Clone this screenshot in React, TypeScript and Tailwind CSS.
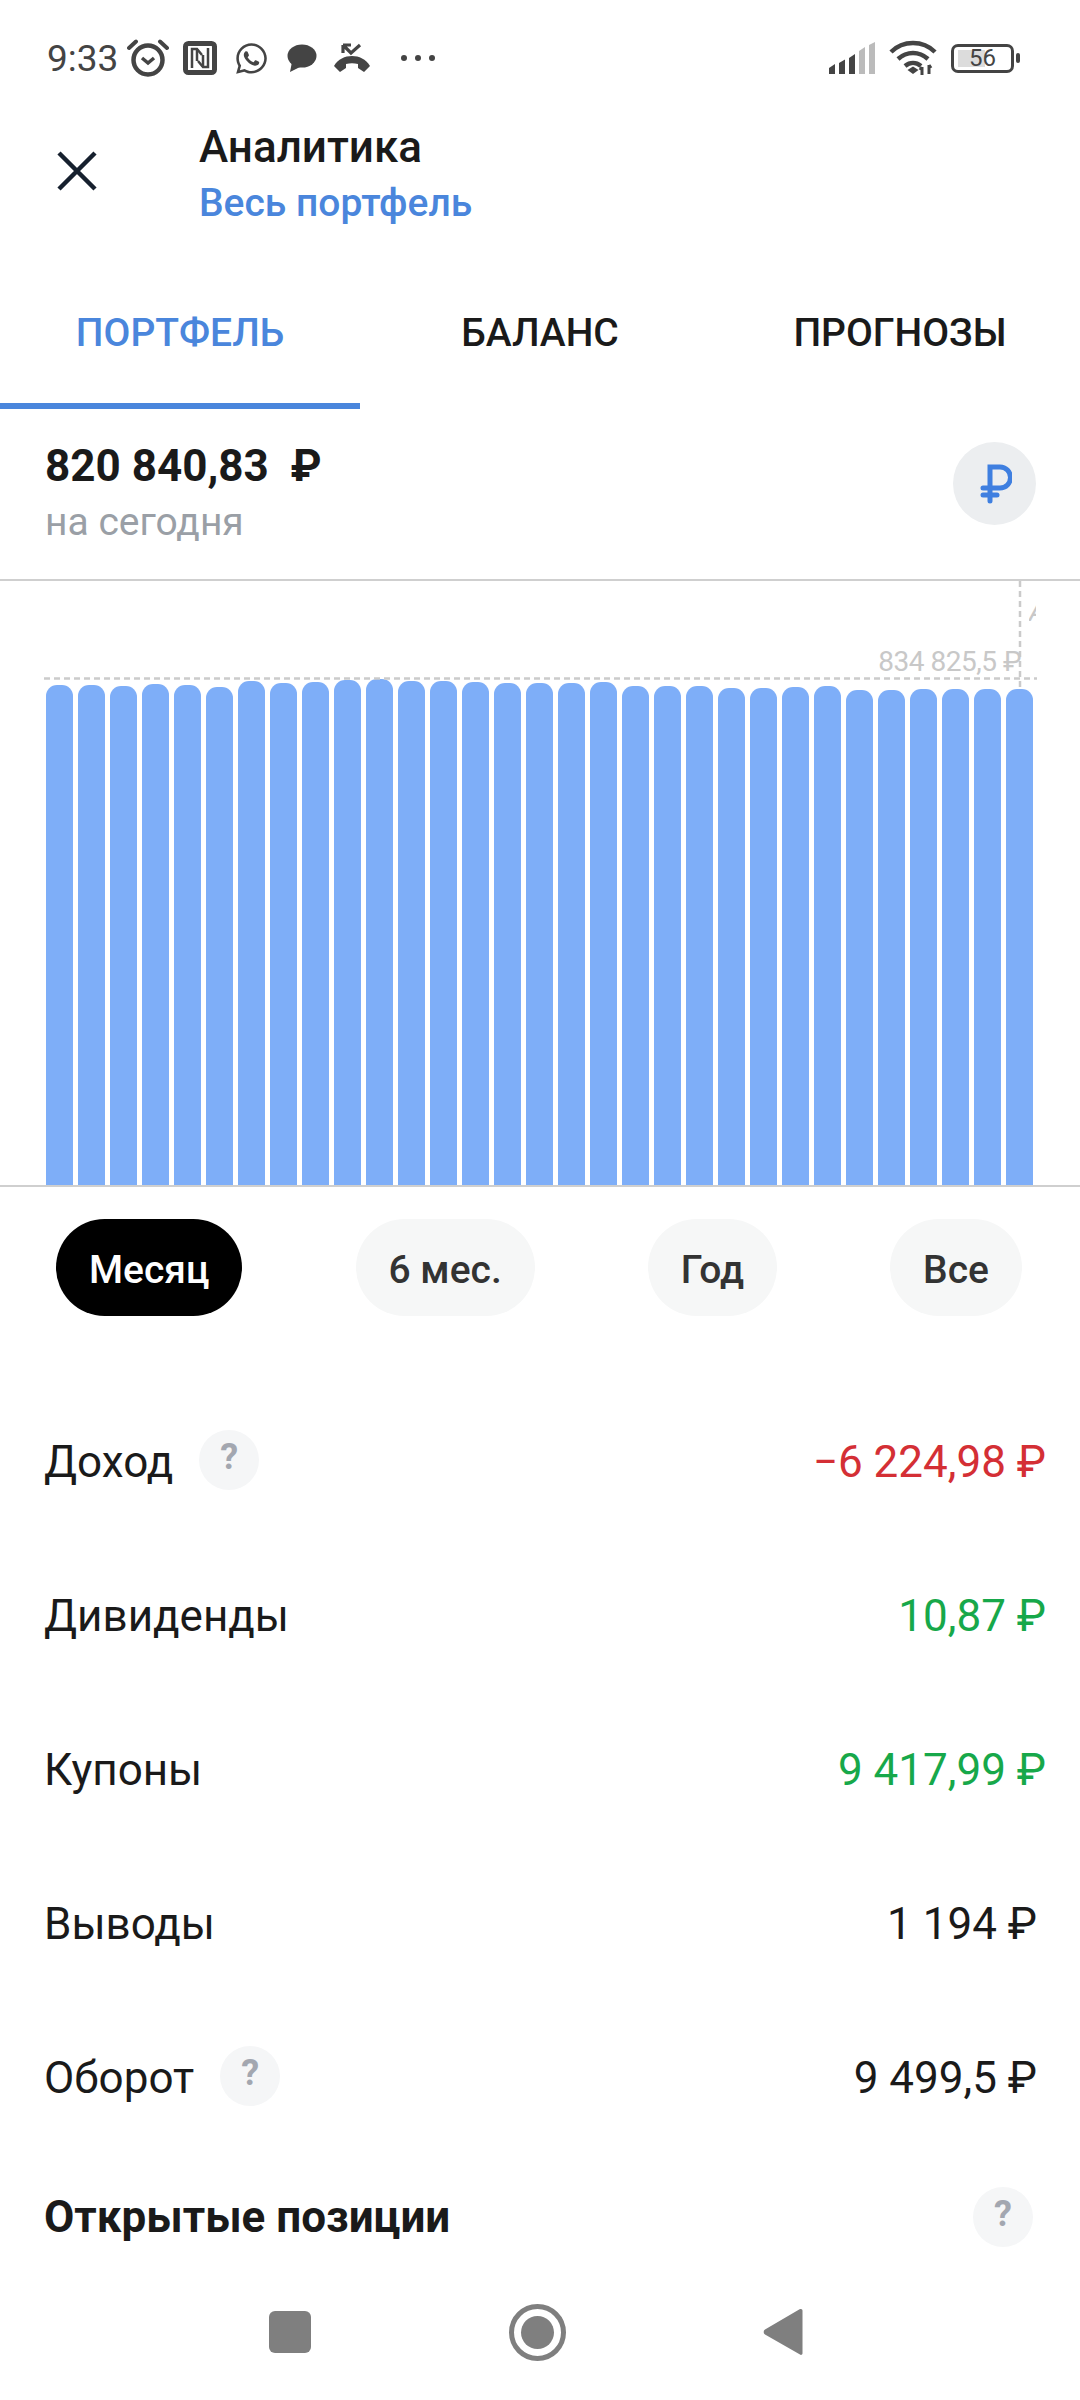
import React from "react";
import { FaWhatsapp } from "react-icons/fa";

const tops = [685,685,686,684,685,687,681,683,682,680,679,681,681,682,683,683,683,682,686,686,686,688,688,687,686,690,690,689,689,689,689];

function Help() {
  return (
    <div className="w-[60px] h-[60px] rounded-full bg-[#f5f6f7] flex items-center justify-center text-[#a3a7b0] text-[36px] font-bold leading-none pb-[6px]">?</div>
  );
}

function Row({ label, value, color, help, pr }: { label: string; value: string; color: string; help?: boolean; pr: string }) {
  return (
    <div className={`h-[154px] flex items-center justify-between pl-[44px] ${pr}`}>
      <div className="flex items-center">
        <span className="text-[44px] text-[#1a1a1a]">{label}</span>
        {help && <div className="ml-[26px] -mt-[5px]"><Help /></div>}
      </div>
      <span className={`text-[44px] ${color}`}>{value}</span>
    </div>
  );
}

function Alarm() {
  return (
    <svg width="42" height="40" viewBox="0 0 42 40" fill="none" stroke="#444" strokeWidth="4">
      <circle cx="21" cy="22" r="14.5" strokeWidth="4.5" />
      <path d="M15 20l6 5 6-5" strokeWidth="3.5" />
      <path d="M2 10L9 3.5M40 10L33 3.5" strokeLinecap="round" />
    </svg>
  );
}

function Nfc() {
  return (
    <svg width="34" height="34" viewBox="0 0 34 34" fill="none">
      <rect x="2.500" y="2.500" width="29" height="29" rx="3" stroke="#444" strokeWidth="5" />
      <path d="M9 27V8h5l5 6" stroke="#444" strokeWidth="2.500" />
      <path d="M25 7v19h-5l-5-6" stroke="#444" strokeWidth="2.500" />
      <path d="M14 8v12M20 14v12" stroke="#444" strokeWidth="2.500" />
    </svg>
  );
}

function Bubble() {
  return (
    <svg width="30" height="28" viewBox="0 0 30 28">
      <ellipse cx="15" cy="12" rx="14.5" ry="11.5" fill="#444" />
      <path d="M3 28l2-10 8 5z" fill="#444" />
    </svg>
  );
}

function MissedCall() {
  return (
    <svg width="38" height="30" viewBox="0 0 38 30" fill="none">
      <path d="M1 23c4-7 11-10 18-10s14 3 18 10l-6 6-6-4v-4c-4-1-8-1-12 0v4l-6 4z" fill="#444" />
      <path d="M10 2h8M10 2v8M10 2l8 8 9-8" stroke="#444" strokeWidth="3.2" />
    </svg>
  );
}

function Signal() {
  return (
    <svg width="48" height="32" viewBox="0 0 48 32">
      <path d="M1 26l6-4v10H1z" fill="#444" />
      <path d="M11 21l6-3.5V32h-6z" fill="#444" />
      <path d="M21 16l6-4v20h-6z" fill="#444" />
      <path d="M31 9l6-4v27h-6z" fill="#bbb" />
      <path d="M41 3l6-3v32h-6z" fill="#bbb" />
    </svg>
  );
}

function Wifi() {
  return (
    <svg width="48" height="36" viewBox="0 0 48 36" fill="none" stroke="#444" strokeWidth="4.5">
      <path d="M2 12C14 0 34 0 46 12" />
      <path d="M9 19c9-8 21-8 30 0" />
      <path d="M16 26c5-4 11-4 16 0" />
      <path d="M18.500 30l5.500-3.500 5.500 3.500-5.500 4z" fill="#444" stroke="none" />
      <path d="M33 27v8M31 30l2-3M40 25v9M40 25l2 3" strokeWidth="3" stroke="#444" />
    </svg>
  );
}

function Battery() {
  return (
    <div className="flex items-center">
      <div className="relative w-[63px] h-[29px] rounded-[7px] border-[3px] border-[#444] overflow-hidden flex items-center justify-center">
        <div className="absolute left-[4px] top-[3px] bottom-[3px] w-[27px] bg-[#dcdcdc]" />
        <span className="relative text-[24px] leading-none text-[#444]">56</span>
      </div>
      <div className="ml-[2px] w-[4px] h-[10px] rounded-[2px] bg-[#444]" />
    </div>
  );
}

function Tab({ label, active }: { label: string; active?: boolean }) {
  return (
    <div className={`h-[139px] flex items-center justify-center pb-[7px] border-b-[6px] text-[39px] font-medium ${active ? "border-[#4a86dc] text-[#4a86dc]" : "border-transparent text-[#1a1a1a]"}`}>
      {label}
    </div>
  );
}

function Pill({ label, active }: { label: string; active?: boolean }) {
  return (
    <div className={`h-[97px] px-[33px] pt-[5px] rounded-full flex items-center text-[39px] font-medium ${active ? "bg-black text-white" : "bg-[#f6f7f7] text-[#333]"}`}>
      {label}
    </div>
  );
}

export default function App() {
  return (
    <div className="w-[1080px] h-[2400px] bg-white overflow-hidden flex flex-col font-['Roboto',sans-serif]">
      {/* status bar */}
      <div className="h-[116px] flex items-center justify-between pl-[47px] pr-[60px]">
        <div className="flex items-center">
          <span className="text-[37px] text-[#444] leading-none">9:33</span>
          <div className="ml-[9px]"><Alarm /></div>
          <div className="ml-[14px]"><Nfc /></div>
          <div className="ml-[17px]"><FaWhatsapp size={35} color="#444" /></div>
          <div className="ml-[18px]"><Bubble /></div>
          <div className="ml-[16px]"><MissedCall /></div>
          <div className="ml-[30px] flex gap-[8px]">
            <span className="w-[6px] h-[6px] rounded-full bg-[#444]" />
            <span className="w-[6px] h-[6px] rounded-full bg-[#444]" />
            <span className="w-[6px] h-[6px] rounded-full bg-[#444]" />
          </div>
        </div>
        <div className="flex items-center">
          <Signal />
          <div className="ml-[13px]"><Wifi /></div>
          <div className="ml-[14px]"><Battery /></div>
        </div>
      </div>

      {/* header */}
      <div className="h-[154px] pt-[3px] flex items-start pl-[57px]">
        <svg width="40" height="40" viewBox="0 0 40 40" className="mt-[32px]" fill="none" stroke="#16202e" strokeWidth="4.5">
          <path d="M2 2L38 38M38 2L2 38" />
        </svg>
        <div className="ml-[102px] flex flex-col">
          <span className="text-[44px] leading-[56px] text-[#1a1a1a] font-medium">Аналитика</span>
          <span className="text-[39px] leading-[56px] text-[#4a86dc] font-medium">Весь портфель</span>
        </div>
      </div>

      {/* tabs */}
      <div className="grid grid-cols-3">
        <Tab label="ПОРТФЕЛЬ" active />
        <Tab label="БАЛАНС" />
        <Tab label="ПРОГНОЗЫ" />
      </div>

      {/* summary */}
      <div className="h-[172px] border-b-[2px] border-[#cfcfcf] flex items-start justify-between pl-[45px] pr-[44px]">
        <div className="flex flex-col pt-[29px]">
          <span className="text-[44px] leading-[56px] font-bold text-[#1a1a1a] whitespace-pre">820 840,83  ₽</span>
          <span className="text-[39px] leading-[56px] text-[#9a9fa6]">на сегодня</span>
        </div>
        <div className="mt-[33px] w-[83px] h-[83px] rounded-full bg-[#eceef0] flex items-center justify-center pl-[3px]">
          <svg width="32" height="40" viewBox="0 0 32 40" fill="none" stroke="#3f7fe0" strokeWidth="5" strokeLinecap="round">
            <path d="M10 37V3h10a9.500 9.500 0 0 1 0 21H3" />
            <path d="M3 31H17" />
          </svg>
        </div>
      </div>

      {/* chart */}
      <div className="relative h-[606px] border-b-[2px] border-[#cfcfcf] overflow-hidden">
        <div className="absolute inset-0 flex items-end gap-[5px] pl-[46px]">
          {tops.map((t, i) => (
            <div key={i} className="w-[27px] rounded-t-[11px] bg-[#7eaef8]" style={{ height: 1185 - t }} />
          ))}
        </div>
        <svg className="absolute left-0 top-0" width="1080" height="120" fill="none" stroke="#cbcbcb" strokeWidth="2.5" strokeDasharray="6 4">
          <path d="M44 97.500H1037" />
          <path d="M1020 0V108" />
        </svg>
        <span className="absolute right-[59px] top-[67px] text-[28px] leading-none tracking-[-0.5px] text-[#c8c8c8]">834 825,5 ₽</span>
        <div className="absolute left-[1029px] top-[14px] w-[7px] h-[34px] overflow-hidden">
          <span className="text-[28px] leading-[34px] italic text-[#c8c8c8]">А</span>
        </div>
      </div>

      {/* periods */}
      <div className="mt-[32px] flex justify-between pl-[56px] pr-[58px]">
        <Pill label="Месяц" active />
        <Pill label="6 мес." />
        <Pill label="Год" />
        <Pill label="Все" />
      </div>

      {/* rows */}
      <div className="mt-[69px] flex flex-col">
        <Row label="Доход" value="−6 224,98 ₽" color="text-[#d42f35]" help pr="pr-[34px]" />
        <Row label="Дивиденды" value="10,87 ₽" color="text-[#17a84a]" pr="pr-[34px]" />
        <Row label="Купоны" value="9 417,99 ₽" color="text-[#17a84a]" pr="pr-[34px]" />
        <Row label="Выводы" value="1 194 ₽" color="text-[#1a1a1a]" pr="pr-[43px]" />
        <Row label="Оборот" value="9 499,5 ₽" color="text-[#1a1a1a]" help pr="pr-[43px]" />
      </div>
      <div className="h-[124px] flex items-center justify-between pl-[44px] pr-[47px]">
        <span className="text-[44px] font-bold text-[#1a1a1a]">Открытые позиции</span>
        <Help />
      </div>

      {/* nav */}
      <div className="h-[106px] flex items-center pl-[269px]">
        <div className="w-[42px] h-[42px] rounded-[6px] bg-[#7f7f7f]" />
        <div className="ml-[198px] w-[57px] h-[57px] rounded-full border-[5px] border-[#7f7f7f] flex items-center justify-center">
          <div className="w-[33px] h-[33px] rounded-full bg-[#7f7f7f]" />
        </div>
        <svg className="ml-[197px]" width="40" height="50" viewBox="0 0 40 50">
          <path d="M38 2a1.500 1.500 0 0 1 1.500 1.500v43a1.500 1.500 0 0 1-2.500 1L2 27.500a3 3 0 0 1 0-5L37 2z" fill="#7f7f7f" />
        </svg>
      </div>
    </div>
  );
}
